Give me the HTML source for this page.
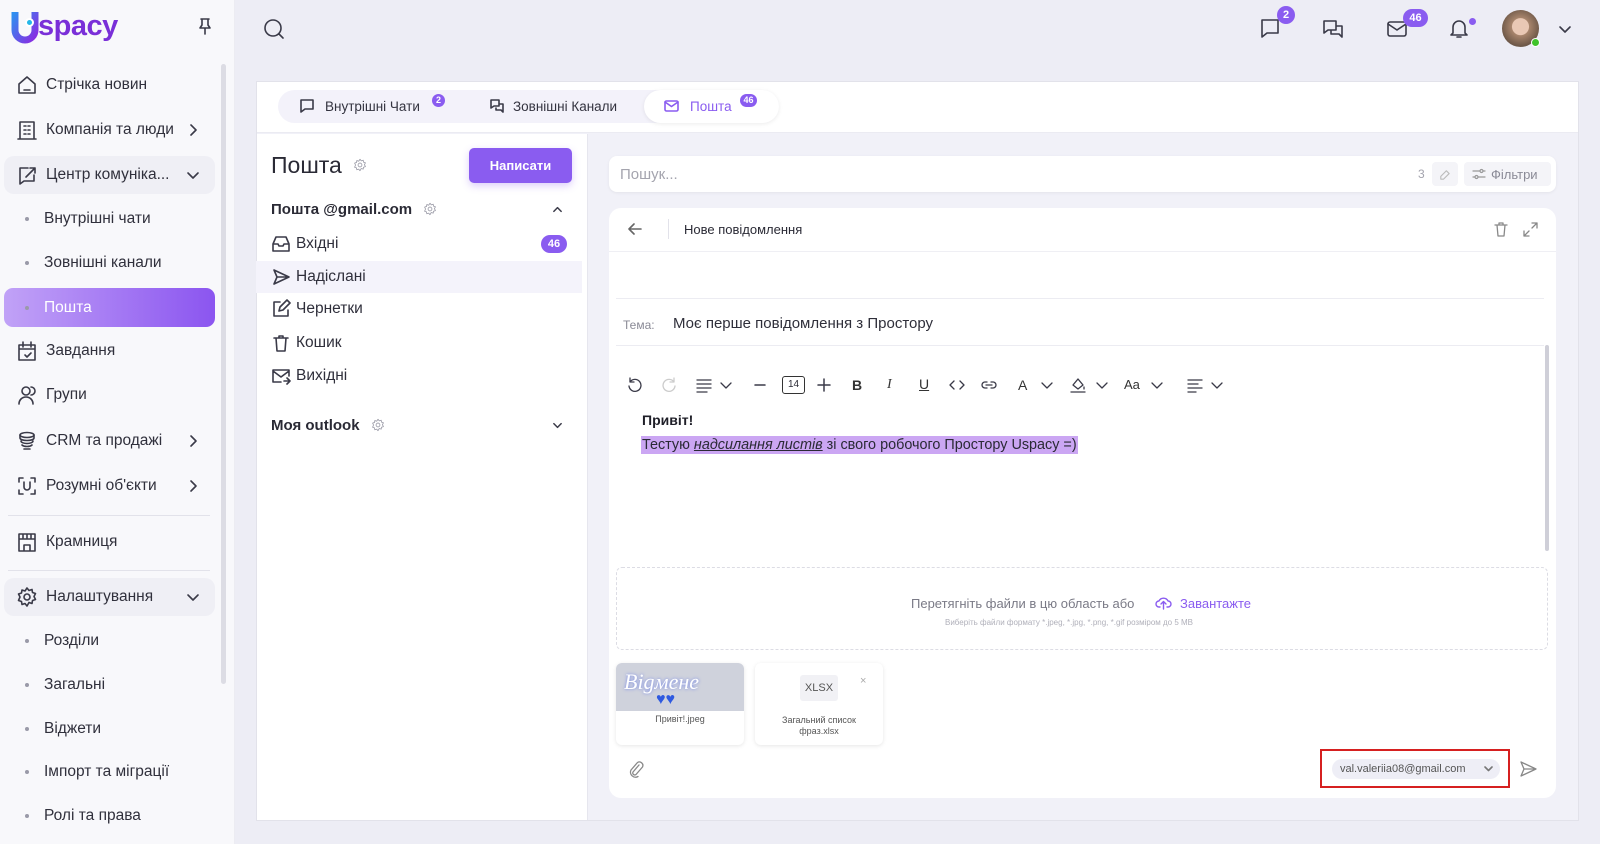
<!DOCTYPE html>
<html><head><meta charset="utf-8">
<style>
*{box-sizing:border-box;margin:0;padding:0}
body{width:1600px;height:844px;overflow:hidden;background:#ededf5;font-family:"Liberation Sans","DejaVu Sans",sans-serif;color:#2b2b36;position:relative}
.a{position:absolute}
svg{fill:none;stroke:#3a3a48;stroke-width:1.6;stroke-linecap:round;stroke-linejoin:round}
.side{left:0;top:0;width:235px;height:844px;background:#f8f8fb;border-right:1px solid #ececf2}
.si{position:absolute;left:4px;width:211px;height:38px;display:flex;align-items:center;font-size:15.5px;color:#30303c}
.si svg{position:absolute;left:12px;width:22px;height:22px}
.si span{position:absolute;left:42px}
.si .chev{left:auto;right:14px;width:16px;height:16px}
.sub span{left:40px}
.sub:before{content:"";position:absolute;left:21px;width:4px;height:4px;border-radius:50%;background:#9a9aa8}
.badge{position:absolute;background:#8a5cf0;color:#fff;font-size:11px;border-radius:10px;text-align:center;font-weight:bold}
.fold{position:absolute;left:256px;width:326px;height:32px;font-size:15.5px;color:#2f2f3b}
.fold svg{position:absolute;left:15px;top:6px;width:20px;height:20px}
.fold span{position:absolute;left:40px;top:7px}
.tb{position:absolute;top:376px;width:18px;height:18px}
</style></head><body>

<!-- sidebar -->
<div class="a side">
 <svg class="a" style="left:10px;top:12px;width:30px;height:32px;stroke:url(#lg);stroke-width:7;stroke-linecap:butt" viewBox="0 0 30 32"><defs><linearGradient id="lg" x1="0" y1="0" x2="1" y2="1"><stop offset="0" stop-color="#2f8ff0"/><stop offset="1" stop-color="#8a2be2"/></linearGradient></defs><path d="M5 0v18a10 10 0 0020 0V0" fill="none"/></svg>
 <div class="a" style="left:25px;top:18px;width:9px;height:9px;border-radius:50%;background:#25b7e8;border:2px solid #fff"></div>
 <div class="a" style="left:38px;top:10px;font-size:29px;font-weight:bold;color:#7a2fd8;letter-spacing:-0.5px">spacy</div>
 <svg class="a" style="left:197px;top:17px;width:16px;height:18px" viewBox="0 0 16 18"><path d="M4 2h8M5 2v6l-2 3h10l-2-3V2M8 11v6"/></svg>
 <div class="a" style="left:221px;top:64px;width:5px;height:620px;background:#dcdce4;border-radius:3px"></div>

 <div class="si" style="top:66px"><svg viewBox="0 0 22 22"><path d="M3 10l8-7 8 7v9H3z M8 16h6"/></svg><span>Стрічка новин</span></div>
 <div class="si" style="top:111px"><svg viewBox="0 0 22 22"><path d="M4 3h14v17H4z M2 20h18 M8 7h2M12 7h2M8 11h2M12 11h2M8 15h2M12 15h2"/></svg><span>Компанія та люди</span><svg class="chev" viewBox="0 0 16 16"><path d="M6 3l5 5-5 5"/></svg></div>
 <div class="si" style="top:156px;background:#efeff5;border-radius:10px"><svg viewBox="0 0 22 22"><path d="M4 4h8 M4 4v16l4-3h10v-6 M10 13l9-9 M14 4h5v5"/></svg><span>Центр комуніка...</span><svg class="chev" viewBox="0 0 16 16"><path d="M3 6l5 5 5-5"/></svg></div>
 <div class="si sub" style="top:200px"><span>Внутрішні чати</span></div>
 <div class="si sub" style="top:244px"><span>Зовнішні канали</span></div>
 <div class="si sub" style="top:288px;height:39px;background:linear-gradient(90deg,#c1a2f7,#8b55f0);border-radius:9px;color:#fff"><span>Пошта</span></div>
 <div class="si" style="top:332px"><svg viewBox="0 0 22 22"><path d="M3 5h16v15H3z M3 9h16 M7 2v5M15 2v5 M9 15l2 2 4-4"/></svg><span>Завдання</span></div>
 <div class="si" style="top:376px"><svg viewBox="0 0 22 22"><circle cx="10" cy="7" r="4"/><path d="M3 20c0-4 3-7 7-7s7 3 7 7 M15 3a4 4 0 010 8"/></svg><span>Групи</span></div>
 <div class="si" style="top:422px"><svg viewBox="0 0 22 22"><ellipse cx="11" cy="5" rx="7" ry="2.5"/><path d="M4 5v3c0 1.5 3 2.5 7 2.5s7-1 7-2.5V5 M5 11c0 1.5 3 2.5 6 2.5s6-1 6-2.5 M6 15c1 1 3 1.5 5 1.5s4-.5 5-1.5 M8 19h6"/></svg><span>CRM та продажі</span><svg class="chev" viewBox="0 0 16 16"><path d="M6 3l5 5-5 5"/></svg></div>
 <div class="si" style="top:467px"><svg viewBox="0 0 22 22"><path d="M3 7V3h4 M15 3h4v4 M19 15v4h-4 M7 19H3v-4 M8 7v5a3 3 0 006 0V7"/></svg><span>Розумні об'єкти</span><svg class="chev" viewBox="0 0 16 16"><path d="M6 3l5 5-5 5"/></svg></div>
 <div class="a" style="left:8px;top:515px;width:202px;height:1px;background:#e2e2ea"></div>
 <div class="si" style="top:523px"><svg viewBox="0 0 22 22"><path d="M3 3h16v17H3z M3 8h16 M8 20v-6h6v6 M7 3v5M11 3v5M15 3v5"/></svg><span>Крамниця</span></div>
 <div class="a" style="left:8px;top:570px;width:202px;height:1px;background:#e2e2ea"></div>
 <div class="si" style="top:578px;background:#efeff5;border-radius:10px"><svg viewBox="0 0 22 22"><circle cx="11" cy="11" r="3"/><path d="M11 2l2 2.5 3-1 .5 3 3 1-1.5 3 1.5 3-3 1-.5 3-3-1L11 20l-2-2.5-3 1-.5-3-3-1L4 11 2.5 8l3-1 .5-3 3 1z"/></svg><span>Налаштування</span><svg class="chev" viewBox="0 0 16 16"><path d="M3 6l5 5 5-5"/></svg></div>
 <div class="si sub" style="top:622px"><span>Розділи</span></div>
 <div class="si sub" style="top:666px"><span>Загальні</span></div>
 <div class="si sub" style="top:710px"><span>Віджети</span></div>
 <div class="si sub" style="top:753px"><span>Імпорт та міграції</span></div>
 <div class="si sub" style="top:797px"><span>Ролі та права</span></div>
</div>

<!-- top bar -->
<svg class="a" style="left:263px;top:18px;width:22px;height:22px" viewBox="0 0 22 22"><circle cx="10" cy="10" r="8"/><path d="M16 16l4 4"/></svg>
<svg class="a" style="left:1259px;top:17px;width:22px;height:22px" viewBox="0 0 22 22"><path d="M3 3h16v13H8l-5 4z"/></svg>
<div class="badge" style="left:1277px;top:6px;width:18px;height:18px;line-height:18px">2</div>
<svg class="a" style="left:1322px;top:18px;width:22px;height:22px" viewBox="0 0 22 22"><path d="M2 3h12v9H6l-4 3z M9 12v4h8l3 3V8h-6"/></svg>
<svg class="a" style="left:1386px;top:19px;width:22px;height:20px" viewBox="0 0 22 20"><rect x="2" y="3" width="18" height="14" rx="2"/><path d="M2 5l9 6 9-6"/></svg>
<div class="badge" style="left:1403px;top:9px;width:25px;height:18px;line-height:18px">46</div>
<svg class="a" style="left:1448px;top:17px;width:22px;height:22px" viewBox="0 0 22 22"><path d="M5 16V10a6 6 0 0112 0v6l2 2H3z M9 20h4"/></svg>
<div class="a" style="left:1469px;top:18px;width:7px;height:7px;border-radius:50%;background:#8a5cf0"></div>
<div class="a" style="left:1502px;top:10px;width:37px;height:37px;border-radius:50%;background:radial-gradient(circle at 50% 45%,#e9c8b4 0 30%,#a8856c 32%,#6e5848 70%,#9aa0a0 100%)"></div>
<div class="a" style="left:1531px;top:38px;width:9px;height:9px;border-radius:50%;background:#3fc32a;border:1px solid #fff"></div>
<svg class="a" style="left:1558px;top:22px;width:14px;height:14px" viewBox="0 0 14 14"><path d="M2 5l5 5 5-5"/></svg>

<!-- main card -->
<div class="a" style="left:256px;top:81px;width:1323px;height:740px;background:#f1f1f8;border:1px solid #e2e2ea"></div>
<div class="a" style="left:257px;top:82px;width:1321px;height:51px;background:#fff;border-bottom:1px solid #ebebf2"></div>
<div class="a" style="left:278px;top:90px;width:501px;height:33px;background:#f3f2fa;border-radius:17px"></div>
<div class="a" style="left:644px;top:90px;width:135px;height:33px;background:#fff;border-radius:17px;box-shadow:0 1px 4px rgba(0,0,0,.08)"></div>
<svg class="a" style="left:299px;top:98px;width:16px;height:16px" viewBox="0 0 16 16"><path d="M2 2h12v9H6l-4 3z"/></svg>
<div class="a" style="left:325px;top:99px;font-size:13.5px;color:#33333f">Внутрішні Чати</div>
<div class="badge" style="left:432px;top:94px;width:13px;height:13px;line-height:13px;font-size:9px">2</div>
<svg class="a" style="left:489px;top:98px;width:16px;height:16px" viewBox="0 0 16 16"><path d="M2 2h8v6H5l-3 2z M7 10v2h5l2 2V6h-3"/></svg>
<div class="a" style="left:513px;top:99px;font-size:13.5px;color:#33333f">Зовнішні Канали</div>
<svg class="a" style="left:664px;top:99px;width:15px;height:14px;stroke:#8a5cf0" viewBox="0 0 15 14"><rect x="1" y="2" width="13" height="10" rx="1.5"/><path d="M1 3l6.5 4.5L14 3"/></svg>
<div class="a" style="left:690px;top:99px;font-size:13.5px;color:#8a5cf0">Пошта</div>
<div class="badge" style="left:740px;top:94px;width:17px;height:13px;line-height:13px;font-size:9px">46</div>

<!-- left panel -->
<div class="a" style="left:257px;top:134px;width:331px;height:686px;background:#fff;border-right:1px solid #e6e6ee"></div>
<div class="a" style="left:271px;top:152px;font-size:23px;color:#2a2a35">Пошта</div>
<svg class="a" style="left:353px;top:158px;width:14px;height:14px;stroke:#9a9aa6;stroke-width:1.3" viewBox="0 0 22 22"><circle cx="11" cy="11" r="3"/><path d="M11 2l2 2.5 3-1 .5 3 3 1-1.5 3 1.5 3-3 1-.5 3-3-1L11 20l-2-2.5-3 1-.5-3-3-1L4 11 2.5 8l3-1 .5-3 3 1z"/></svg>
<div class="a" style="left:469px;top:148px;width:103px;height:35px;background:#8a5cf0;border-radius:5px;color:#fff;font-size:13px;font-weight:bold;text-align:center;line-height:35px;box-shadow:0 3px 8px rgba(138,92,240,.3)">Написати</div>
<div class="a" style="left:271px;top:201px;font-size:15px;font-weight:bold;color:#2a2a35">Пошта @gmail.com</div>
<svg class="a" style="left:423px;top:202px;width:14px;height:14px;stroke:#9a9aa6;stroke-width:1.3" viewBox="0 0 22 22"><circle cx="11" cy="11" r="3"/><path d="M11 2l2 2.5 3-1 .5 3 3 1-1.5 3 1.5 3-3 1-.5 3-3-1L11 20l-2-2.5-3 1-.5-3-3-1L4 11 2.5 8l3-1 .5-3 3 1z"/></svg>
<svg class="a" style="left:552px;top:204px;width:11px;height:11px" viewBox="0 0 12 12"><path d="M2 8l4-4 4 4"/></svg>
<div class="a" style="left:256px;top:261px;width:326px;height:32px;background:#f4f3fb"></div>
<div class="fold" style="top:228px"><svg viewBox="0 0 20 20"><path d="M2 10l3-7h10l3 7v7H2z M2 10h5l1 2h4l1-2h5"/></svg><span>Вхідні</span></div>
<div class="badge" style="left:541px;top:235px;width:26px;height:18px;line-height:18px">46</div>
<div class="fold" style="top:261px"><svg viewBox="0 0 20 20"><path d="M3 3l15 7-15 7 3-7z M6 10h12"/></svg><span>Надіслані</span></div>
<div class="fold" style="top:293px"><svg viewBox="0 0 20 20"><path d="M9 3H3v14h14v-6 M8 12l1-4 7-7 3 3-7 7z"/></svg><span>Чернетки</span></div>
<div class="fold" style="top:327px"><svg viewBox="0 0 20 20"><path d="M3 5h14 M8 5V3h4v2 M5 5l1 13h8l1-13"/></svg><span>Кошик</span></div>
<div class="fold" style="top:360px"><svg viewBox="0 0 20 20"><path d="M10 16H2V4h16v6 M2 5l8 6 8-6 M13 15h6 M16 12l3 3-3 3"/></svg><span>Вихідні</span></div>
<div class="a" style="left:271px;top:417px;font-size:15px;font-weight:bold;color:#2a2a35">Моя outlook</div>
<svg class="a" style="left:371px;top:418px;width:14px;height:14px;stroke:#9a9aa6;stroke-width:1.3" viewBox="0 0 22 22"><circle cx="11" cy="11" r="3"/><path d="M11 2l2 2.5 3-1 .5 3 3 1-1.5 3 1.5 3-3 1-.5 3-3-1L11 20l-2-2.5-3 1-.5-3-3-1L4 11 2.5 8l3-1 .5-3 3 1z"/></svg>
<svg class="a" style="left:552px;top:420px;width:11px;height:11px" viewBox="0 0 12 12"><path d="M2 4l4 4 4-4"/></svg>

<!-- search -->
<div class="a" style="left:609px;top:156px;width:947px;height:36px;background:#fff;border-radius:8px;box-shadow:0 1px 3px rgba(0,0,0,.06)"></div>
<div class="a" style="left:620px;top:166px;font-size:15px;color:#a4a4ae">Пошук...</div>
<div class="a" style="left:1418px;top:167px;font-size:12px;color:#a4a4ae">3</div>
<div class="a" style="left:1432px;top:162px;width:26px;height:24px;background:#f4f4f8;border-radius:4px"></div>
<svg class="a" style="left:1438px;top:168px;width:13px;height:13px;stroke:#bbb;stroke-width:1.2" viewBox="0 0 14 14"><path d="M3 9l6-6 3 3-6 6H3z"/></svg>
<div class="a" style="left:1464px;top:162px;width:87px;height:24px;background:#f4f4f8;border-radius:4px"></div>
<svg class="a" style="left:1472px;top:168px;width:14px;height:12px;stroke:#999;stroke-width:1.2" viewBox="0 0 14 12"><path d="M1 3h7M11 3h2M1 9h2M6 9h7"/><circle cx="9.5" cy="3" r="1.5"/><circle cx="4.5" cy="9" r="1.5"/></svg>
<div class="a" style="left:1491px;top:167px;font-size:13px;color:#8a8a96">Фільтри</div>

<!-- compose -->
<div class="a" style="left:609px;top:208px;width:947px;height:590px;background:#fff;border-radius:12px"></div>
<svg class="a" style="left:627px;top:221px;width:16px;height:16px;stroke:#666" viewBox="0 0 16 16"><path d="M14 8H2 M7 3L2 8l5 5"/></svg>
<div class="a" style="left:668px;top:219px;width:1px;height:20px;background:#e2e2ea"></div>
<div class="a" style="left:684px;top:222px;font-size:13px;color:#2a2a35">Нове повідомлення</div>
<svg class="a" style="left:1494px;top:222px;width:14px;height:15px;stroke:#888;stroke-width:1.3" viewBox="0 0 14 15"><path d="M1 3h12 M5 3V1h4v2 M3 3l1 11h6l1-11"/></svg>
<svg class="a" style="left:1523px;top:222px;width:15px;height:15px;stroke:#888;stroke-width:1.3" viewBox="0 0 15 15"><path d="M9 1h5v5 M14 1L9 6 M6 14H1V9 M1 14l5-5"/></svg>
<div class="a" style="left:609px;top:251px;width:947px;height:1px;background:#efeff4"></div>
<div class="a" style="left:616px;top:298px;width:928px;height:1px;background:#ececf2"></div>
<div class="a" style="left:623px;top:318px;font-size:12px;color:#8a8a96">Тема:</div>
<div class="a" style="left:673px;top:315px;font-size:15px;color:#2f2f3a">Моє перше повідомлення з Простору</div>
<div class="a" style="left:616px;top:345px;width:928px;height:1px;background:#ececf2"></div>
<div class="a" style="left:1545px;top:345px;width:4px;height:206px;background:#cfcfd8;border-radius:2px"></div>

<!-- toolbar -->
<svg class="tb" style="left:626px" viewBox="0 0 18 18"><path d="M4 6a6 6 0 11-1 4 M4 2v4h4" stroke-width="1.3"/></svg>
<svg class="tb" style="left:660px;stroke:#ccc" viewBox="0 0 18 18"><path d="M14 6a6 6 0 101 4 M14 2v4h-4" stroke-width="1.3"/></svg>
<svg class="tb" style="left:695px" viewBox="0 0 18 18"><path d="M2 4h14M2 8h14M2 12h14M2 16h10" stroke-width="1.3"/></svg>
<svg class="tb" style="left:719px;width:14px" viewBox="0 0 14 18"><path d="M2 7l5 5 5-5" stroke-width="1.3"/></svg>
<svg class="tb" style="left:753px;width:14px" viewBox="0 0 14 18"><path d="M2 9h10" stroke-width="1.5"/></svg>
<div class="a" style="left:782px;top:376px;width:23px;height:18px;border:1.5px solid #333;border-radius:3px;font-size:10px;text-align:center;line-height:15px">14</div>
<svg class="tb" style="left:815px" viewBox="0 0 18 18"><path d="M3 9h12M9 3v12" stroke-width="1.5"/></svg>
<div class="a" style="left:852px;top:377px;font-size:14px;font-weight:bold;color:#333">B</div>
<div class="a" style="left:887px;top:377px;font-size:14px;font-style:italic;font-family:'Liberation Serif',serif;color:#333">I</div>
<div class="a" style="left:919px;top:376px;font-size:14px;text-decoration:underline;color:#333">U</div>
<svg class="tb" style="left:948px" viewBox="0 0 18 18"><path d="M6 5L2 9l4 4 M12 5l4 4-4 4" stroke-width="1.3"/></svg>
<svg class="tb" style="left:980px" viewBox="0 0 18 18"><path d="M7 6H5a3 3 0 000 6h2 M11 6h2a3 3 0 010 6h-2 M6 9h6" stroke-width="1.3"/></svg>
<div class="a" style="left:1018px;top:377px;font-size:14px;color:#333">A</div>
<svg class="tb" style="left:1040px;width:14px" viewBox="0 0 14 18"><path d="M2 7l5 5 5-5" stroke-width="1.3"/></svg>
<svg class="tb" style="left:1069px" viewBox="0 0 18 18"><path d="M4 9l5-6 5 6-5 4z M15 11v2 M2 16h14" stroke-width="1.3"/></svg>
<svg class="tb" style="left:1095px;width:14px" viewBox="0 0 14 18"><path d="M2 7l5 5 5-5" stroke-width="1.3"/></svg>
<div class="a" style="left:1124px;top:377px;font-size:13px;color:#333">Aa</div>
<svg class="tb" style="left:1150px;width:14px" viewBox="0 0 14 18"><path d="M2 7l5 5 5-5" stroke-width="1.3"/></svg>
<svg class="tb" style="left:1186px" viewBox="0 0 18 18"><path d="M2 4h14M2 8h10M2 12h14M2 16h8" stroke-width="1.3"/></svg>
<svg class="tb" style="left:1210px;width:14px" viewBox="0 0 14 18"><path d="M2 7l5 5 5-5" stroke-width="1.3"/></svg>

<div class="a" style="left:642px;top:412px;font-size:14px;font-weight:bold;color:#1f1f28">Привіт!</div>
<div class="a" style="left:641px;top:436px;height:18px;padding:0 1px;background:#cba6f3;font-size:14.4px;color:#2a2a35;line-height:18px">Тестую <i style="text-decoration:underline">надсилання листів</i> зі свого робочого Простору Uspacy =)</div>

<!-- dropzone -->
<div class="a" style="left:616px;top:567px;width:932px;height:83px;border:1px dashed #dcdce4;border-radius:6px"></div>
<div class="a" style="left:911px;top:596px;font-size:13px;color:#7a7a86">Перетягніть файли в цю область або</div>
<svg class="a" style="left:1155px;top:595px;width:17px;height:15px;stroke:#8a5cf0;stroke-width:1.4" viewBox="0 0 17 15"><path d="M5 12H4a3 3 0 010-6 5 5 0 019 0 3 3 0 010 6h-1 M8.5 14V7 M6 9l2.5-2.5L11 9"/></svg>
<div class="a" style="left:1180px;top:596px;font-size:13px;color:#8a5cf0">Завантажте</div>
<div class="a" style="left:945px;top:618px;font-size:8px;color:#b0b0ba">Виберіть файли формату *.jpeg, *.jpg, *.png, *.gif розміром до 5 MB</div>

<!-- attachments -->
<div class="a" style="left:616px;top:663px;width:128px;height:82px;border-radius:6px;background:#fff;box-shadow:0 1px 4px rgba(0,0,0,.1);overflow:hidden">
 <div style="height:48px;background:#cfd2dc;position:relative">
  <div style="position:absolute;left:8px;top:6px;font-size:22px;font-style:italic;font-family:'Liberation Serif',serif;color:#fff;text-shadow:0 0 3px #6a7ee8">Bigмене</div>
  <div style="position:absolute;left:40px;top:28px;font-size:16px;color:#2f5ae0">♥♥</div>
 </div>
 <div style="text-align:center;font-size:9px;color:#555;margin-top:3px">Привіт!.jpeg</div>
</div>
<div class="a" style="left:755px;top:663px;width:128px;height:82px;border-radius:6px;background:#fff;box-shadow:0 1px 4px rgba(0,0,0,.1)">
 <div style="position:absolute;left:45px;top:12px;width:38px;height:26px;background:#f1f1f5;border-radius:3px;font-size:11px;color:#555;text-align:center;line-height:26px">XLSX</div>
 <div style="position:absolute;left:105px;top:12px;font-size:11px;color:#aaa">×</div>
 <div style="position:absolute;top:52px;width:100%;text-align:center;font-size:9px;color:#555;line-height:11px">Загальний список<br>фраз.xlsx</div>
</div>

<svg class="a" style="left:628px;top:760px;width:16px;height:18px;stroke:#888;stroke-width:1.3" viewBox="0 0 16 18"><path d="M11 5l-6 7a2 2 0 003 2.5l6.5-7.5a3.5 3.5 0 00-5-4.5L3 10a5 5 0 007 6.5"/></svg>
<div class="a" style="left:1320px;top:749px;width:190px;height:39px;border:2px solid #d62020"></div>
<div class="a" style="left:1332px;top:759px;width:168px;height:20px;background:#eeeef6;border-radius:10px;font-size:11px;color:#555;line-height:20px;padding-left:8px">val.valeriia08@gmail.com</div>
<svg class="a" style="left:1484px;top:765px;width:9px;height:8px;stroke:#777" viewBox="0 0 9 8"><path d="M1 2l3.5 3.5L8 2"/></svg>
<svg class="a" style="left:1519px;top:760px;width:18px;height:18px;stroke:#888;stroke-width:1.3" viewBox="0 0 18 18"><path d="M2 2l15 7-15 7 3-7z M5 9h12"/></svg>
</body></html>
